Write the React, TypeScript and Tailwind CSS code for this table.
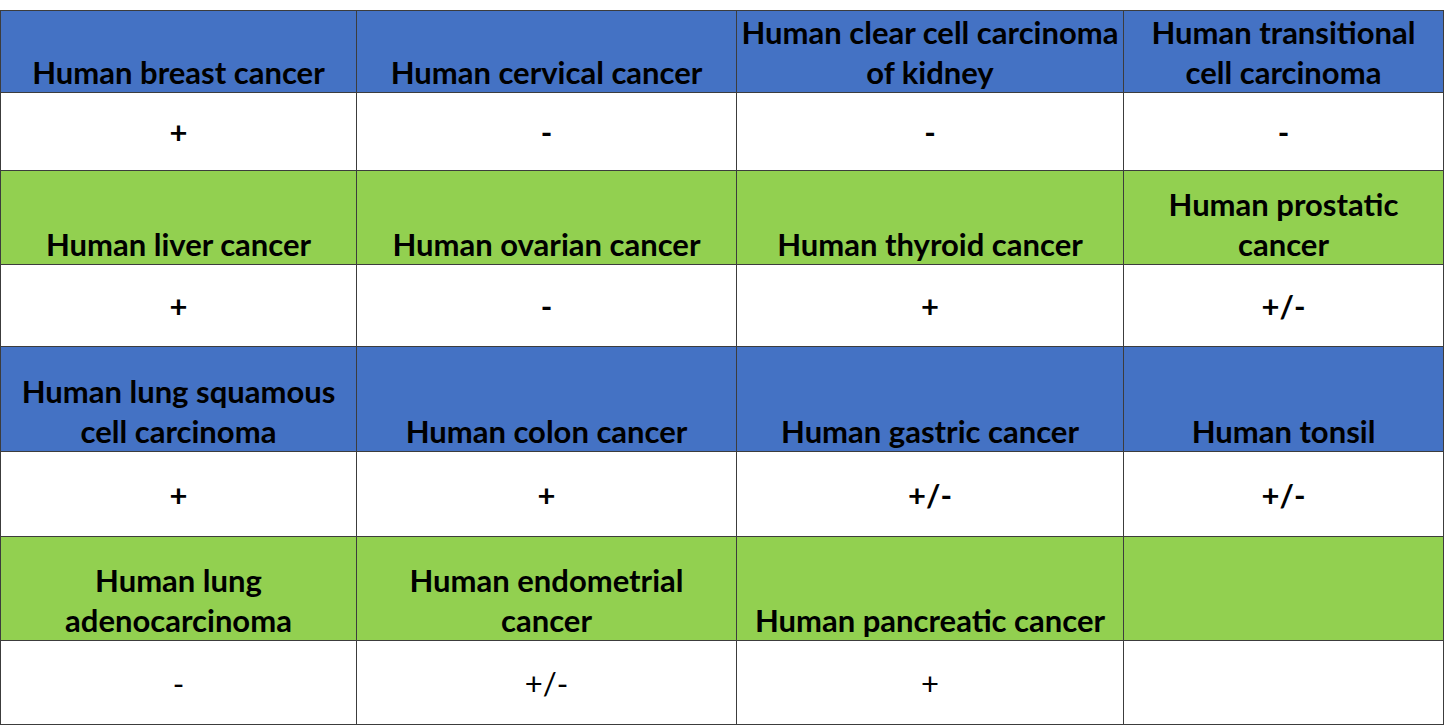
import React from "react";

const blue = "bg-[#4472c4]";
const green = "bg-[#92d050]";

const groups: { color: string; headers: (string[] | null)[]; values: string[]; bold: boolean }[] = [
  {
    color: blue,
    headers: [["Human breast cancer"], ["Human cervical cancer"], ["Human clear cell carcinoma", "of kidney"], ["Human transitional", "cell carcinoma"]],
    values: ["+", "-", "-", "-"],
    bold: true,
  },
  {
    color: green,
    headers: [["Human liver cancer"], ["Human ovarian cancer"], ["Human thyroid cancer"], ["Human prostatic", "cancer"]],
    values: ["+", "-", "+", "+/-"],
    bold: true,
  },
  {
    color: blue,
    headers: [["Human lung squamous", "cell carcinoma"], ["Human colon cancer"], ["Human gastric cancer"], ["Human tonsil"]],
    values: ["+", "+", "+/-", "+/-"],
    bold: true,
  },
  {
    color: green,
    headers: [["Human lung", "adenocarcinoma"], ["Human endometrial", "cancer"], ["Human pancreatic cancer"], null],
    values: ["-", "+/-", "+", ""],
    bold: false,
  },
];

export default function App() {
  return (
    <div className="w-[1445px] h-[727px] bg-white pt-[10px]" style={{ fontFamily: "Lato, 'Liberation Sans', sans-serif" }}>
      <div className="grid grid-cols-[355px_379px_386px_1fr] grid-rows-[81px_77px_93px_81px_104px_84px_103px_83px] gap-px p-px bg-[#3c3c3c] w-[1444px] text-black">
        {groups.map((g, gi) => (
          <React.Fragment key={gi}>
            {g.headers.map((h, i) => (
              <div key={"h" + gi + i} className={`${g.color} flex flex-col items-center justify-end pb-[0px] font-bold text-[31px] leading-[40px] text-center`}>
                {h ? h.map((l, k) => <div key={k} className="whitespace-nowrap">{l}</div>) : null}
              </div>
            ))}
            {g.values.map((v, i) => (
              <div key={"v" + gi + i} className={`bg-white flex items-center justify-center text-[31px] pt-[2px] ${g.bold ? "font-bold" : "font-normal"}`}>
                {v}
              </div>
            ))}
          </React.Fragment>
        ))}
      </div>
    </div>
  );
}
